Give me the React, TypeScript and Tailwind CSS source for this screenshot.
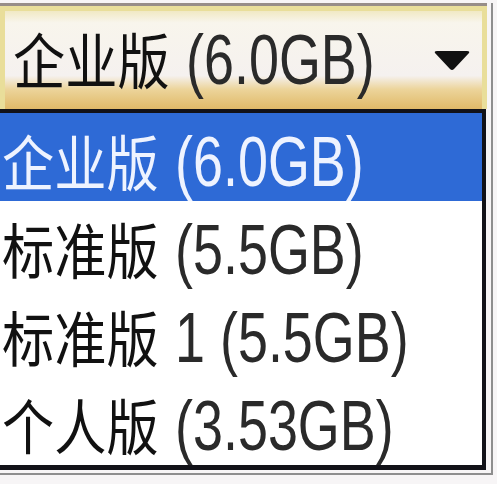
import React from "react";

type Option = { cjk: string; latin: string };

const options: Option[] = [
  { cjk: "企业版", latin: "(6.0GB)" },
  { cjk: "标准版", latin: "(5.5GB)" },
  { cjk: "标准版", latin: "1 (5.5GB)" },
  { cjk: "个人版", latin: "(3.53GB)" },
];

function Label({ item, dim }: { item: Option; dim?: boolean }) {
  return (
    <div className="flex items-baseline whitespace-nowrap">
      <span className="w-[173px] shrink-0">
        <span className="inline-block origin-left scale-x-[0.87] text-[60px] leading-none font-['Noto_Sans_CJK_SC',sans-serif]">
          {item.cjk}
        </span>
      </span>
      <span
        className={
          "inline-block origin-left scale-x-[0.77] text-[70px] leading-none font-['Liberation_Sans',Arial,sans-serif] " +
          (dim ? "text-[#2a2a2a]" : "")
        }
      >
        {item.latin}
      </span>
    </div>
  );
}

export default function App() {
  const selected = 0;

  return (
    <div className="w-[497px] h-[484px] bg-[#f7f5f6] pt-[3px]">
      <div className="w-[493px] border-r-2 border-b-2 border-[#8e8e8e] pb-[3px]">
        {/* combo box */}
        <div className="w-[487px] h-[106px] border-t-[3px] border-[#978d88]">
          <div className="relative h-full flex items-center pl-[8px] border-x-[5px] border-t-[5px] border-[#e9de9a] bg-[linear-gradient(to_bottom,#f1e9c4_0%,#f8f5ec_12%,#f5f1ef_66%,#ecd49a_80%,#e0b968_100%)] text-[#111]">
            <Label item={options[selected]} dim />
            <svg width="36" height="20" viewBox="0 0 36 20" className="absolute right-[12px] top-[40px]">
              <path d="M1 2 Q0 0 3 0 L33 0 Q36 0 35 2 L20 18 Q18 20 16 18 Z" fill="#111" />
            </svg>
          </div>
        </div>

        {/* dropdown list */}
        <div className="w-[486px] bg-white border-t-4 border-r-4 border-b-[5px] border-[#121218]">
          {options.map((o, i) => (
            <div
              key={i}
              className={
                "h-[88px] flex items-center pl-[2px] pt-[10px] " +
                (i === selected ? "bg-[#2e6ad6] text-[#eef3ff]" : "text-[#111]")
              }
            >
              <Label item={o} dim={i !== selected} />
            </div>
          ))}
        </div>
      </div>
    </div>
  );
}
